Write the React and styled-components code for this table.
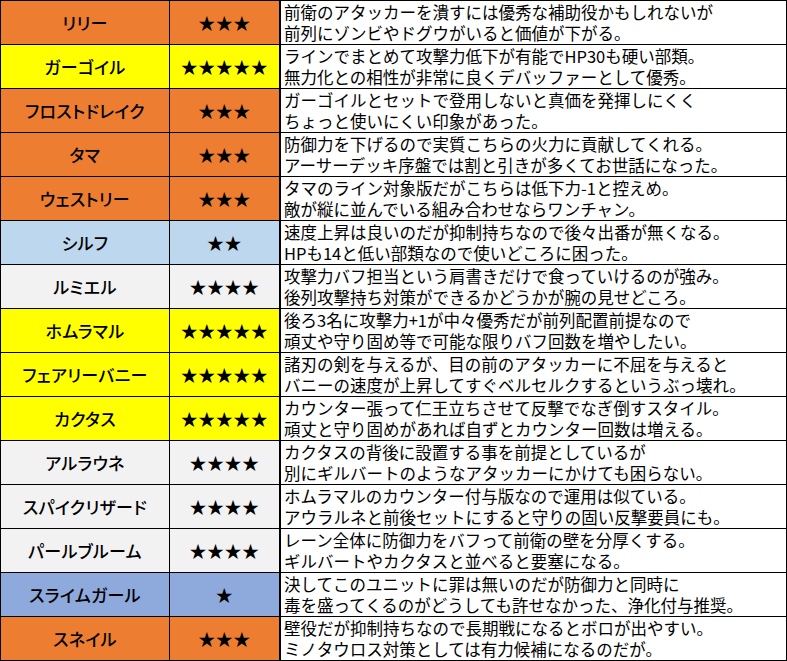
import styled, { createGlobalStyle } from "styled-components"

const GlobalStyle = createGlobalStyle`
  html, body {
    margin: 0;
    padding: 0;
    background: #ffffff;
  }
  body {
    font-family: "Noto Sans CJK JP", "Noto Sans", sans-serif;
    color: #000;
  }
`

const colors = {
  orange: "#ed7d31",
  yellow: "#ffff00",
  sky: "#bdd7ee",
  gray: "#f2f2f2",
  blue: "#8ea9db",
}

const units = [
  { name: "リリー", stars: 3, color: "orange", text: ["前衛のアタッカーを潰すには優秀な補助役かもしれないが", "前列にゾンビやドグウがいると価値が下がる。"] },
  { name: "ガーゴイル", stars: 5, color: "yellow", text: ["ラインでまとめて攻撃力低下が有能でHP30も硬い部類。", "無力化との相性が非常に良くデバッファーとして優秀。"] },
  { name: "フロストドレイク", stars: 3, color: "orange", text: ["ガーゴイルとセットで登用しないと真価を発揮しにくく", "ちょっと使いにくい印象があった。"] },
  { name: "タマ", stars: 3, color: "orange", text: ["防御力を下げるので実質こちらの火力に貢献してくれる。", "アーサーデッキ序盤では割と引きが多くてお世話になった。"] },
  { name: "ウェストリー", stars: 3, color: "orange", text: ["タマのライン対象版だがこちらは低下力-1と控えめ。", "敵が縦に並んでいる組み合わせならワンチャン。"] },
  { name: "シルフ", stars: 2, color: "sky", text: ["速度上昇は良いのだが抑制持ちなので後々出番が無くなる。", "HPも14と低い部類なので使いどころに困った。"] },
  { name: "ルミエル", stars: 4, color: "gray", text: ["攻撃力バフ担当という肩書きだけで食っていけるのが強み。", "後列攻撃持ち対策ができるかどうかが腕の見せどころ。"] },
  { name: "ホムラマル", stars: 5, color: "yellow", text: ["後ろ3名に攻撃力+1が中々優秀だが前列配置前提なので", "頑丈や守り固め等で可能な限りバフ回数を増やしたい。"] },
  { name: "フェアリーバニー", stars: 5, color: "yellow", text: ["諸刃の剣を与えるが、目の前のアタッカーに不屈を与えると", "バニーの速度が上昇してすぐベルセルクするというぶっ壊れ。"] },
  { name: "カクタス", stars: 5, color: "yellow", text: ["カウンター張って仁王立ちさせて反撃でなぎ倒すスタイル。", "頑丈と守り固めがあれば自ずとカウンター回数は増える。"] },
  { name: "アルラウネ", stars: 4, color: "gray", text: ["カクタスの背後に設置する事を前提としているが", "別にギルバートのようなアタッカーにかけても困らない。"] },
  { name: "スパイクリザード", stars: 4, color: "gray", text: ["ホムラマルのカウンター付与版なので運用は似ている。", "アウラルネと前後セットにすると守りの固い反撃要員にも。"] },
  { name: "パールブルーム", stars: 4, color: "gray", text: ["レーン全体に防御力をバフって前衛の壁を分厚くする。", "ギルバートやカクタスと並べると要塞になる。"] },
  { name: "スライムガール", stars: 1, color: "blue", text: ["決してこのユニットに罪は無いのだが防御力と同時に", "毒を盛ってくるのがどうしても許せなかった、浄化付与推奨。"] },
  { name: "スネイル", stars: 3, color: "orange", text: ["壁役だが抑制持ちなので長期戦になるとボロが出やすい。", "ミノタウロス対策としては有力候補になるのだが。"] },
]

const Table = styled.div`
  display: grid;
  grid-template-columns: 169px 110px 1fr;
  grid-auto-rows: 44px;
  width: 787px;
  box-sizing: border-box;
  border-top: 1px solid #000;
  border-left: 1px solid #000;
`

const Cell = styled.div`
  box-sizing: border-box;
  border-right: 1px solid #000;
  border-bottom: 1px solid #000;
  background: ${(p) => p.$bg || "#fff"};
  min-width: 0;
`

const NameCell = styled(Cell)`
  display: flex;
  align-items: center;
  justify-content: center;
  font-size: 17px;
  font-weight: 500;
  font-feature-settings: "palt";
  letter-spacing: 0.3px;
`

const StarCell = styled(Cell)`
  display: flex;
  align-items: center;
  justify-content: center;
  font-size: 17px;
  letter-spacing: 0.5px;
`

const DescCell = styled(Cell)`
  border-left: 1px solid #000;
  padding: 0 0 0 3px;
  display: flex;
  flex-direction: column;
  justify-content: center;
  font-size: 16.5px;
  line-height: 21px;
  white-space: nowrap;
  overflow: hidden;
`

const Line = styled.span`
  display: block;
`

const App = () => {
  return (
    <>
      <GlobalStyle />
      <Table>
        {units.map((u) => (
          <Row key={u.name} unit={u} />
        ))}
      </Table>
    </>
  )
}

const Row = ({ unit }) => {
  const bg = colors[unit.color]
  return (
    <>
      <NameCell $bg={bg}>{unit.name}</NameCell>
      <StarCell $bg={bg}>{"★".repeat(unit.stars)}</StarCell>
      <DescCell>
        {unit.text.map((t) => (
          <Line key={t}>{t}</Line>
        ))}
      </DescCell>
    </>
  )
}

export default App
